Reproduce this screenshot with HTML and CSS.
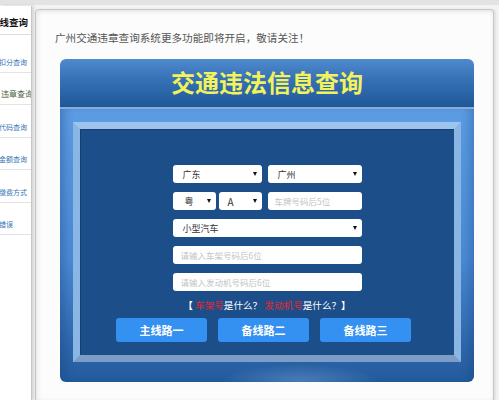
FILE: index.html
```html
<!DOCTYPE html>
<html lang="zh-CN">
<head>
<meta charset="utf-8">
<title>交通违法信息查询</title>
<link rel="stylesheet" href="styles.css">
</head>
<body>
<div class="page">
  <aside class="side">
    <div class="side-title"><span>违章在线查询</span></div>
    <ul class="side-list">
      <li class="side-item">驾照扣分查询</li>
      <li class="side-item active">违章查询</li>
      <li class="side-item">违章代码查询</li>
      <li class="side-item">罚款金额查询</li>
      <li class="side-item">罚款缴费方式</li>
      <li class="side-item">常见错误</li>
    </ul>
  </aside>
  <main class="panel">
    <p class="notice">广州交通违章查询系统更多功能即将开启，敬请关注！</p>
    <section class="query">
      <header class="query-head"><h1>交通违法信息查询</h1></header>
      <div class="query-body">
        <div class="frame">
          <div class="form">
            <div class="row row-two">
              <div class="sel">广东</div>
              <div class="sel">广州</div>
            </div>
            <div class="row row-three">
              <div class="sel sel-prov">粤</div>
              <div class="sel sel-letter">A</div>
              <input class="field field-plate" type="text" placeholder="车牌号码后5位">
            </div>
            <div class="row">
              <div class="sel">小型汽车</div>
            </div>
            <div class="row">
              <input class="field" type="text" placeholder="请输入车架号码后6位">
            </div>
            <div class="row">
              <input class="field" type="text" placeholder="请输入发动机号码后6位">
            </div>
          </div>
          <p class="help"><b>【</b> <em>车架号</em>是什么？ <em>发动机号</em>是什么？<b>】</b></p>
          <div class="btns">
            <button class="btn" type="button">主线路一</button>
            <button class="btn" type="button">备线路二</button>
            <button class="btn" type="button">备线路三</button>
          </div>
        </div>
      </div>
    </section>
  </main>
</div>
</body>
</html>
```
FILE: styles.css
```css
* { box-sizing: border-box; }
html, body { margin: 0; height: 100%; overflow: hidden; }
body {
  background: linear-gradient(#e3e3e3 0, #e3e3e3 5px, #f3f3f3 5px);
  font-family: "Noto Sans CJK SC", "Noto Sans", sans-serif;
}
.page {
  display: flex;
  height: 400px;
  padding: 6px 5px 0 0;
}

/* sidebar */
.side {
  width: 32px;
  flex: none;
  background: #fff;
  border-right: 1px solid #c6c6c6;
  box-shadow: 2px 0 3px rgba(0, 0, 0, 0.13);
  overflow: hidden;
  position: relative;
  z-index: 1;
}
.side-title {
  height: 29px;
  padding: 4px 3px 0 0;
  border-bottom: 1px solid #dedede;
  display: flex;
  justify-content: flex-end;
  align-items: center;
  white-space: nowrap;
  font-size: 9.5px;
  font-weight: 700;
  color: #111;
}
.side-list {
  list-style: none;
  margin: 0;
  padding: 5px 0 0;
}
.side-item {
  height: 32.5px;
  padding-top: 15.5px;
  border-bottom: 1px solid #e3e3e3;
  font-size: 7px;
  line-height: 12px;
  color: #3673b5;
  white-space: nowrap;
  text-indent: -15px;
  overflow: hidden;
}
.side-item.active {
  font-size: 8px;
  text-indent: 1px;
  color: #4d5f45;
}

/* main panel */
.panel {
  flex: 1;
  margin: 3px 0 0 3px;
  background: #fcfcfc;
  border: 1px solid #c8c8c8;
  border-bottom: none;
  border-radius: 4px 4px 0 0;
  box-shadow: inset 0 2px 4px rgba(0, 0, 0, 0.07), inset 3px 0 5px rgba(0, 0, 0, 0.04), 2px 0 2px rgba(0, 0, 0, 0.08);
  padding: 21px 0 0 24px;
}
.notice {
  margin: 0 0 14px -5px;
  font-size: 10.6px;
  line-height: 14px;
  color: #555;
}

/* query box */
.query {
  width: 414px;
  border-radius: 6px;
  overflow: hidden;
}
.query-head {
  height: 50px;
  background: linear-gradient(#4f8acf, #3570b5 45%, #1f5898);
  border-bottom: 2px solid #88acd4;
  display: flex;
  align-items: center;
  justify-content: center;
  padding-bottom: 2px;
}
.query-head h1 {
  margin: 0;
  font-size: 24px;
  line-height: 30px;
  font-weight: 700;
  color: #f2f25c;
}
.query-body {
  padding: 13px 13px 20px;
  background:
    radial-gradient(ellipse 80px 18px at 58% 100%, rgba(140, 180, 230, 0.4), rgba(140, 180, 230, 0)),
    linear-gradient(#5c9ce2, #4b8ad5 55%, #2d66aa 88%, #235b9c);
  box-shadow: inset 10px 0 10px -6px rgba(20, 60, 120, 0.35), inset -10px 0 10px -6px rgba(20, 60, 120, 0.3);
}
.frame {
  border: 7px solid #8cb8e6;
  border-color: #9cc4ee #8ab6e4 #7c9dc5 #8ab6e4;
  background: #1c4e8a;
  box-shadow: inset 1px 1px 0 #163e6e;
  padding: 36px 0 13px;
}

/* form */
.form {
  width: 189px;
  margin: 0 auto;
  display: flex;
  flex-direction: column;
  gap: 9px;
}
.row {
  display: flex;
  height: 18px;
}
.row > * { flex: 1; }
.row-two { gap: 6px; }
.row-two > :first-child { flex: none; width: 89px; }
.row-three .sel-prov,
.row-three .sel-letter { flex: none; width: 43px; margin-right: 3px; }
.row-three .sel-letter { margin-right: 6px; }
.sel {
  height: 18px;
  background: #fff;
  border-radius: 3px;
  display: flex;
  align-items: center;
  justify-content: space-between;
  padding: 0 5px 0 10px;
  font-size: 9px;
  color: #333;
}
.sel::after {
  content: "";
  width: 0;
  height: 0;
  border-left: 2.5px solid transparent;
  border-right: 2.5px solid transparent;
  border-top: 4px solid #111;
}
.sel-prov { padding-left: 12px; }
.sel-letter { padding-left: 9px; font-size: 10px; }
.field {
  height: 18px;
  border: none;
  border-radius: 3px;
  background: #fff;
  padding: 0 8px;
  font-family: inherit;
  font-size: 8.5px;
  color: #333;
  outline: none;
  min-width: 0;
}
.field-plate { padding-left: 7px; }
.field::placeholder { color: #c4c4c4; }

.help {
  margin: 8px 0 0;
  text-align: center;
  font-size: 9.6px;
  line-height: 12px;
  color: #fff;
}
.help b { font-weight: 700; }
.help em { font-style: normal; color: #e2262a; }

.btns {
  display: flex;
  justify-content: center;
  gap: 11px;
  margin-top: 7px;
  padding-right: 7px;
}
.btn {
  width: 91px;
  height: 24px;
  border: none;
  border-radius: 3px;
  background: #3491f1;
  color: #fff;
  font-family: inherit;
  font-size: 11px;
  font-weight: 700;
  padding: 0;
}
```
